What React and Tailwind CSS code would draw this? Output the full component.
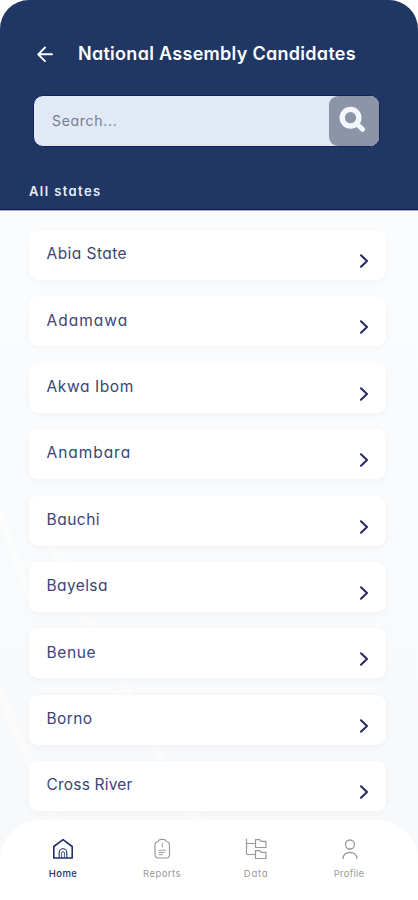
const states = [
  { name: "Abia State", tracking: "tracking-[0.45px]" },
  { name: "Adamawa", tracking: "tracking-[1px]" },
  { name: "Akwa Ibom", tracking: "tracking-[0.6px]" },
  { name: "Anambara", tracking: "tracking-[0.95px]" },
  { name: "Bauchi", tracking: "tracking-[0.5px]" },
  { name: "Bayelsa", tracking: "tracking-[0.4px]" },
  { name: "Benue", tracking: "tracking-[0.6px]" },
  { name: "Borno", tracking: "tracking-[0.4px]" },
  { name: "Cross River", tracking: "tracking-[0.2px]" },
];

function HomeIcon() {
  return (
    <svg className="h-[22px] w-[22px]" viewBox="0 0 22 22" fill="none" stroke="currentColor" strokeWidth="1.6" strokeLinejoin="round">
      <path d="M1.800 8.500 11 1.600l9.200 6.900V20H1.800Z" />
      <path d="M7.200 19.500v-5a3.800 3.800 0 0 1 7.600 0v5" strokeWidth="1.1" />
      <path d="M9.600 19.500v-4.500a1.400 1.400 0 0 1 2.800 0v4.500" strokeWidth="0.8" />
    </svg>
  );
}

function ReportsIcon() {
  return (
    <svg className="h-[22px] w-[22px]" viewBox="0 0 22 22" fill="none" stroke="currentColor" strokeWidth="1.2" strokeLinejoin="round">
      <path d="M7 3.500C7.500 2 8.500 1.300 10 1.300h2.500c1.500 0 2.500.7 3 2.200 2 .2 3 1.500 3 3.300v9.700c0 2.200-1.200 3.500-3.500 3.500H7.500C5.200 20 4 18.700 4 16.500V6.800c0-1.800 1-3.100 3-3.300Z" />
      <path d="M11.200 5v4.500M7.800 12.300h7M7.800 14.500h5.800M7.800 16.700h4" strokeWidth="1" />
    </svg>
  );
}

function DataIcon() {
  return (
    <svg className="h-[22px] w-[22px]" viewBox="0 0 22 22" fill="none" stroke="currentColor" strokeWidth="1.2" strokeLinejoin="round">
      <path d="M1.500 .8v14.700a1 1 0 0 0 1 1H10M1.500 5.500H10" />
      <path d="M10.500 1.600h4.200l1.500 1.700H21v6.200H10.500Z" />
      <path d="M10.500 12.600h4.200l1.500 1.700H21v6.200H10.500Z" />
    </svg>
  );
}

function ProfileIcon() {
  return (
    <svg className="h-[22px] w-[22px]" viewBox="0 0 22 22" fill="none" stroke="currentColor" strokeWidth="1.3">
      <circle cx="12" cy="6.500" r="4.500" />
      <path d="M5.100 21v-.7c0-3.500 3-5.800 6.900-5.800s6.900 2.300 6.900 5.800v.7" />
    </svg>
  );
}

const tabs = [
  { label: "Home", icon: HomeIcon, className: "text-[#1f2f68]", text: "font-medium tracking-[0.4px]" },
  { label: "Reports", icon: ReportsIcon, className: "text-[#999999]", text: "tracking-[0.45px]" },
  { label: "Data", icon: DataIcon, className: "text-[#999999]", text: "tracking-[0.7px]" },
  { label: "Profile", icon: ProfileIcon, className: "text-[#999999]", text: "tracking-[0.25px]" },
];

function Header() {
  return (
    <header className="h-[211px] shrink-0 rounded-t-[29px] border-b border-[#a6acc8] bg-[#1f3762] shadow-[inset_0_-1px_0_#101d59]">
      <div className="flex h-[95px] items-center pt-[12px] pl-[36px]">
        <svg className="h-[18px] w-[18px] text-white" viewBox="0 0 18 18" fill="none" stroke="currentColor" strokeWidth="1.9" strokeLinecap="round" strokeLinejoin="round">
          <path d="M16 9.300H2.500M9 2.500 2.200 9.300l6.800 6.800" />
        </svg>
        <h1 className="ml-6 whitespace-nowrap text-[18px] leading-6 font-semibold tracking-[0.29px] text-white">
          National Assembly Candidates
        </h1>
      </div>
      <div className="ml-[33px] flex h-[52px] w-[347px] rounded-[10px] border border-[#14215c] bg-[#e1e8f6]">
        <span className="flex-1 pl-[18px] text-[14px] leading-[49px] tracking-[0.7px] text-[#777d8b]">Search...</span>
        <div className="flex h-[50px] w-[50px] items-center justify-center rounded-[9px] bg-[#8c94a7]">
          <svg className="mr-[4px] mb-[4px] h-[28px] w-[28px]" viewBox="0 0 28 28" fill="none" stroke="#f3f7ff" strokeLinecap="round">
            <circle cx="12.500" cy="12.700" r="8.300" strokeWidth="5.400" />
            <path d="m19.500 19.500 5 4.800" strokeWidth="5" />
          </svg>
        </div>
      </div>
      <h2 className="mt-[34px] ml-[29px] text-[13px] leading-5 font-semibold tracking-[1.4px] text-[#e9eefb]">All states</h2>
    </header>
  );
}

function StateRow({ name, tracking }) {
  return (
    <li className="flex h-[50px] items-center rounded-[9px] bg-white pr-[17px] pl-[17.500px] shadow-[0_2px_6px_rgba(30,40,70,0.04)]">
      <span className={`flex-1 pb-[1.500px] text-[15.500px] leading-5 text-[#3c4674] ${tracking}`}>{name}</span>
      <svg className="mt-[12px] h-[14px] w-[10px]" viewBox="0 0 10 14" fill="none" stroke="#252960" strokeWidth="2" strokeLinecap="round" strokeLinejoin="round">
        <path d="m2 1.300 6 5.700-6 5.700" />
      </svg>
    </li>
  );
}

export default function App() {
  return (
    <div className="flex h-[900px] w-full flex-col overflow-hidden bg-white font-['Inter',sans-serif] [font-feature-settings:'cv11']">
      <Header />
      <main className="relative h-[689px] shrink-0 bg-linear-to-b from-[#fbfcfd] to-[#f7f8fa]">
        {/* faint diagonal rays behind the list */}
        <svg className="absolute inset-0 h-full w-full" viewBox="0 0 418 689" fill="none" stroke="#ffffff" strokeWidth="8" opacity="0.45">
          <path d="M-5 290 35 400M-5 470 55 610M50 330 200 620M120 480 220 640" />
        </svg>
        <ul className="relative flex flex-col gap-[16.400px] pt-[19px] pr-[32px] pl-[29px]">
          {states.map((state) => (
            <StateRow key={state.name} {...state} />
          ))}
        </ul>
        <nav className="absolute inset-x-0 bottom-0 grid h-[80px] grid-cols-[98px_100px_88px_98px] rounded-t-[40px] bg-white pt-[18px] pl-[14px]">
          {tabs.map(({ label, icon: Icon, className, text }) => (
            <div key={label} className={`flex flex-col items-center ${className}`}>
              <Icon />
              <span className={`mt-[8px] text-[9.500px] leading-3 ${text}`}>{label}</span>
            </div>
          ))}
        </nav>
      </main>
    </div>
  );
}
